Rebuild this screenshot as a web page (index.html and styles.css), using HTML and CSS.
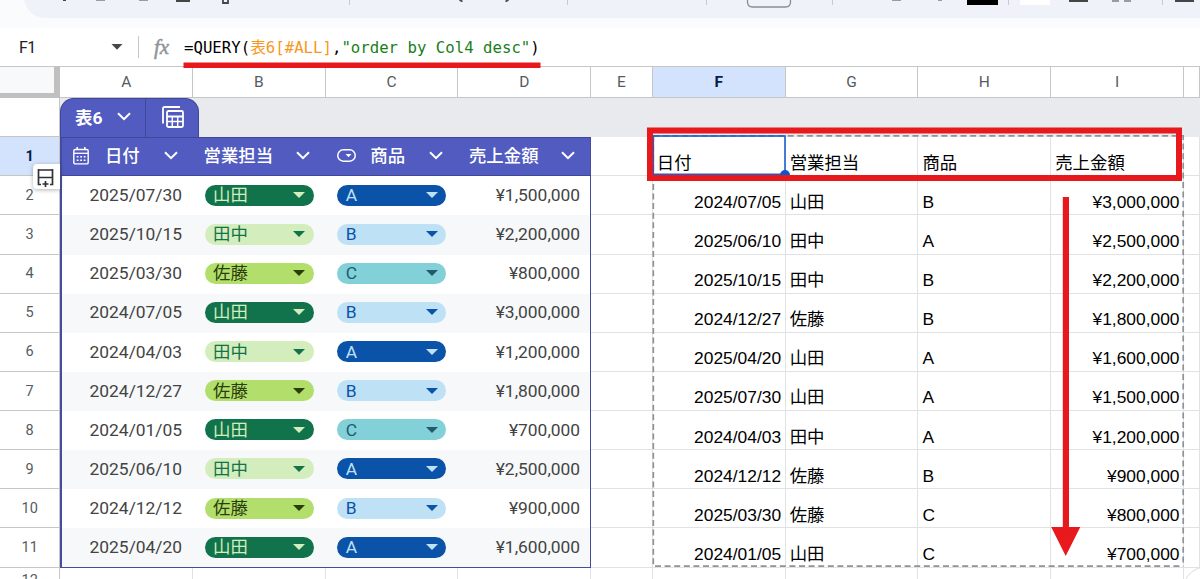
FILE: index.html
```
<!DOCTYPE html>
<html lang="ja">
<head>
    <meta charset="UTF-8">
    <meta name="viewport" content="width=device-width, initial-scale=1.0">
    <title>表6</title>
    <link rel="stylesheet" href="styles.css">
</head>
<body>
    <header class="toolbar">
        <svg width="1200" height="28" viewBox="0 0 1200 28">
            <path d="M24 0C27 11 34 18 46 18H1200V0Z" fill="#eff3f9"/>
            <g fill="#444746">
                <path d="M63 0h3v1h-3zM176 0h14v2h-14zM1069 0h19v2h-19zM1175 0h19v2h-19z"/>
            </g>
            <path d="M96 0h9v1h-9zM139 0h9v1h-9zM892 0h9v1h-9zM938 0h4v1h-4zM1112 0h7v2h-7zM1124 0h7v2h-7z" fill="#9a9da0"/>
            <path d="M223 0v3h5v-3M459.500 0l3 1.500M508.500 0l-3 1.500" fill="none" stroke="#444746" stroke-width="1.800"/>
            <path d="M349.500 0v5M567.500 0v5M706.500 0v5M832.500 0v5M1008.500 0v5M1162.500 0v5" stroke="#c7c9cc"/>
            <path d="M747.500 0v2q0 5 5 5h33q5 0 5-5V0" fill="none" stroke="#8a8d90" stroke-width="1.300"/>
            <path d="M967 0h31v5h-31z" fill="#000"/>
            <path d="M1020 0h30v5h-30z" fill="#fff"/>
        </svg>
    </header>

    <div class="formula-bar">
        <div class="name-box">
            <span>F1</span>
            <svg width="12" height="6" viewBox="0 0 12 6"><path d="M.5 0h11L6 5.800z" fill="#444746"/></svg>
        </div>
        <span class="fx">fx</span>
        <div class="formula">=QUERY(<span class="ref">表6[#ALL]</span>,<span class="str">"order by Col4 desc"</span>)</div>
    </div>

    <main class="sheet">
        <div class="row col-heads">
            <div class="corner"></div>
            <div>A</div><div>B</div><div>C</div><div>D</div><div>E</div>
            <div class="active">F</div><div>G</div><div>H</div><div>I</div><div></div>
        </div>

        <div class="tab-row">
            <div class="num"></div>
            <div class="tab">
                <div class="tab-name">表6 <svg class="chev" viewBox="0 0 14 9"><path d="M1 1.200l6 6 6-6"/></svg></div>
                <div class="tab-icon">
                    <svg width="22" height="22" viewBox="0 0 22 22" fill="none" stroke="#fff">
                        <path d="M1 17.500V2.500Q1 1 2.500 1H18" stroke-width="1.800"/>
                        <rect x="5" y="5" width="16" height="16" rx="1.500" stroke-width="1.800"/>
                        <path d="M5 10.500h16" stroke-width="2"/>
                        <path d="M5 15.500h16M10.300 10v11M15.700 10v11" stroke-width="1.500"/>
                    </svg>
                </div>
            </div>
        </div>

        <div class="row head">
            <div class="num active">1</div>
            <div class="t first">
                <svg class="cal" width="16" height="18" viewBox="0 0 16 18" fill="none" stroke="#fff">
                    <rect x=".8" y="2.500" width="14.400" height="14.400" rx="1.500" stroke-width="1.400"/>
                    <path d="M1 6.300h14" stroke-width="1.300"/><path d="M4.200 0v3M11.800 0v3" stroke-width="1.500"/>
                    <path d="M3.700 9.800h9M3.700 13.300h9" stroke-width="1.600" stroke-dasharray="1.800 1.700"/>
                </svg>
                <span>日付</span><svg class="chev" viewBox="0 0 14 9"><path d="M1 1.200l6 6 6-6"/></svg>
            </div>
            <div class="t"><span>営業担当</span><svg class="chev" viewBox="0 0 14 9"><path d="M1 1.200l6 6 6-6"/></svg></div>
            <div class="t">
                <svg class="drop" width="19" height="13" viewBox="0 0 19 13"><rect x=".8" y=".8" width="17.400" height="11.400" rx="5.500" fill="none" stroke="#fff" stroke-width="1.500"/><path d="M8.500 5h6l-3 3.200z" fill="#fff"/></svg>
                <span>商品</span><svg class="chev" viewBox="0 0 14 9"><path d="M1 1.200l6 6 6-6"/></svg>
            </div>
            <div class="t last"><span>売上金額</span><svg class="chev" viewBox="0 0 14 9"><path d="M1 1.200l6 6 6-6"/></svg></div>
            <div></div><div>日付</div><div>営業担当</div><div>商品</div><div>売上金額</div><div></div>
        </div>

        <div class="row">
            <div class="num">2</div>
            <div class="t first">2025/07/30</div><div class="t"><span class="chip yamada">山田</span></div><div class="t"><span class="chip a">A</span></div><div class="t last">¥1,500,000</div>
            <div></div><div class="right">2024/07/05</div><div>山田</div><div>B</div><div class="right">¥3,000,000</div><div></div>
        </div>
        <div class="row band">
            <div class="num">3</div>
            <div class="t first">2025/10/15</div><div class="t"><span class="chip tanaka">田中</span></div><div class="t"><span class="chip b">B</span></div><div class="t last">¥2,200,000</div>
            <div></div><div class="right">2025/06/10</div><div>田中</div><div>A</div><div class="right">¥2,500,000</div><div></div>
        </div>
        <div class="row">
            <div class="num">4</div>
            <div class="t first">2025/03/30</div><div class="t"><span class="chip sato">佐藤</span></div><div class="t"><span class="chip c">C</span></div><div class="t last">¥800,000</div>
            <div></div><div class="right">2025/10/15</div><div>田中</div><div>B</div><div class="right">¥2,200,000</div><div></div>
        </div>
        <div class="row band">
            <div class="num">5</div>
            <div class="t first">2024/07/05</div><div class="t"><span class="chip yamada">山田</span></div><div class="t"><span class="chip b">B</span></div><div class="t last">¥3,000,000</div>
            <div></div><div class="right">2024/12/27</div><div>佐藤</div><div>B</div><div class="right">¥1,800,000</div><div></div>
        </div>
        <div class="row">
            <div class="num">6</div>
            <div class="t first">2024/04/03</div><div class="t"><span class="chip tanaka">田中</span></div><div class="t"><span class="chip a">A</span></div><div class="t last">¥1,200,000</div>
            <div></div><div class="right">2025/04/20</div><div>山田</div><div>A</div><div class="right">¥1,600,000</div><div></div>
        </div>
        <div class="row band">
            <div class="num">7</div>
            <div class="t first">2024/12/27</div><div class="t"><span class="chip sato">佐藤</span></div><div class="t"><span class="chip b">B</span></div><div class="t last">¥1,800,000</div>
            <div></div><div class="right">2025/07/30</div><div>山田</div><div>A</div><div class="right">¥1,500,000</div><div></div>
        </div>
        <div class="row">
            <div class="num">8</div>
            <div class="t first">2024/01/05</div><div class="t"><span class="chip yamada">山田</span></div><div class="t"><span class="chip c">C</span></div><div class="t last">¥700,000</div>
            <div></div><div class="right">2024/04/03</div><div>田中</div><div>A</div><div class="right">¥1,200,000</div><div></div>
        </div>
        <div class="row band">
            <div class="num">9</div>
            <div class="t first">2025/06/10</div><div class="t"><span class="chip tanaka">田中</span></div><div class="t"><span class="chip a">A</span></div><div class="t last">¥2,500,000</div>
            <div></div><div class="right">2024/12/12</div><div>佐藤</div><div>B</div><div class="right">¥900,000</div><div></div>
        </div>
        <div class="row">
            <div class="num">10</div>
            <div class="t first">2024/12/12</div><div class="t"><span class="chip sato">佐藤</span></div><div class="t"><span class="chip b">B</span></div><div class="t last">¥900,000</div>
            <div></div><div class="right">2025/03/30</div><div>佐藤</div><div>C</div><div class="right">¥800,000</div><div></div>
        </div>
        <div class="row band end">
            <div class="num">11</div>
            <div class="t first">2025/04/20</div><div class="t"><span class="chip yamada">山田</span></div><div class="t"><span class="chip a">A</span></div><div class="t last">¥1,600,000</div>
            <div></div><div class="right">2024/01/05</div><div>山田</div><div>C</div><div class="right">¥700,000</div><div></div>
        </div>
        <div class="row short">
            <div class="num">12</div>
            <div></div><div></div><div></div><div></div><div></div><div></div><div></div><div></div><div></div><div></div>
        </div>
    </main>

    <div class="add-row">
        <svg width="17" height="18" viewBox="0 0 17 18" fill="none" stroke="#303134" stroke-width="1.700">
            <path d="M1.500 0v15.500H4M15.500 0v15.500H13M1.500 1h14M1.500 8.500h14M8.500 12v6M5.500 15h6"/>
        </svg>
    </div>

    <!-- selection, spill range and marks -->
    <svg class="marks" width="1200" height="579" viewBox="0 0 1200 579">
        <g fill="none" stroke="#8f9397" stroke-width="1.700" stroke-dasharray="6 3.600">
            <path d="M653.300 135.900H1183.200V566.200"/>
            <path d="M653.300 135.900V566.200H1183.200"/>
        </g>
        <rect x="653.300" y="136" width="131.700" height="38.300" fill="none" stroke="#1a5fcb" stroke-width="1.600"/>
        <circle cx="785" cy="175" r="5" fill="#0b57d0"/>
        <rect x="650" y="130.500" width="529" height="47.500" fill="none" stroke="#e8191c" stroke-width="6"/>
        <path d="M183.500 62.500h357v5.500h-357z" fill="#e8191c"/>
        <path d="M1062.800 197h6.200v330h11.300l-14.600 29-14.500-29h11.600z" fill="#e8191c"/>
        <circle cx="1206" cy="590" r="23" fill="#fff" stroke="#dadce0"/>
    </svg>
</body>
</html>
```

FILE: styles.css
```
* {
    box-sizing: border-box;
}

body {
    margin: 0;
    height: 579px;
    overflow: hidden;
    position: relative;
    background: #fff;
    font-family: Roboto, "Noto Sans CJK JP", sans-serif;
    font-size: 17.4px;
    color: #434343;
}

svg {
    display: block;
    flex: none;
}

.toolbar {
    height: 28px;
    background: #f9fbfd;
}

/* formula bar */
.formula-bar {
    display: flex;
    align-items: center;
    height: 38px;
}

.name-box {
    display: flex;
    align-items: center;
    justify-content: space-between;
    width: 139px;
    height: 22px;
    padding: 0 15px 0 19px;
    border-right: 1px solid #c7c7c7;
    font-size: 16px;
    letter-spacing: -0.5px;
    color: #202124;
}

.fx {
    width: 45px;
    padding-left: 15px;
    font: italic 21px "Liberation Serif", serif;
    color: #909498;
    -webkit-text-stroke: 0.5px #909498;
}

.formula {
    padding-top: 1px;
    font-family: "DejaVu Sans Mono", "Noto Sans CJK JP", monospace;
    font-size: 15.7px;
    line-height: 24px;
    white-space: pre;
    color: #000;
}

.ref {
    color: #f7981d;
}

.str {
    color: #188018;
}

/* grid */
.row {
    display: grid;
    grid-template-columns: 60.4px repeat(4, 132.7px) 61.700px repeat(4, 132.8px) 1fr;
    height: 39.14px;
}

.row > div {
    display: flex;
    align-items: flex-end;
    padding: 0 4px 0.700px 4px;
    border-right: 1px solid #e1e2e3;
    border-bottom: 1px solid #e1e2e3;
    font-family: "Liberation Sans", "Noto Sans CJK JP", sans-serif;
    line-height: 24px;
    color: #000;
    white-space: nowrap;
}

.row > .right {
    justify-content: flex-end;
    padding-right: 3.500px;
}

.col-heads {
    height: 32px;
}

.col-heads > div {
    align-items: center;
    justify-content: center;
    padding: 0;
    border-top: 1px solid #c4c7c5;
    border-color: #c4c7c5;
    font-family: Roboto, sans-serif;
    font-size: 15.5px;
    color: #575b5f;
}

.col-heads > .corner {
    border-right: 6px solid #c0c0c0;
    border-bottom: 5px solid #c0c0c0;
    background: #f8f9fa;
}

.row > .active {
    background: #d3e3fd;
    color: #041e49;
    font-weight: 700;
}

.row > .num,
.tab-row > .num {
    align-items: center;
    justify-content: center;
    padding: 1px 0 0;
    border-right: 1px solid #c4c7c5;
    border-bottom: 1px solid #c4c7c5;
    font-family: Roboto, sans-serif;
    font-size: 14.500px;
    color: #575b5f;
}

.row > .num.active {
    color: #041e49;
}

.row.short {
    height: 26px;
}

/* table tab */
.tab-row {
    display: flex;
    height: 39.200px;
    background: #e8eaed;
}

.tab-row > .num {
    width: 60px;
    background: #fff;
}

.tab {
    display: flex;
    width: 139px;
    border: 1px solid #3f4798;
    border-bottom: 0;
    border-radius: 14px 14px 0 0;
    background: #525bbf;
    color: #fff;
}

.tab-name {
    display: flex;
    align-items: center;
    justify-content: space-between;
    width: 85px;
    padding: 0 14px 4px 14px;
    border-right: 1px solid #3f4798;
    font-weight: 700;
}

.tab-icon {
    flex: 1;
    padding: 7px 0 0 16px;
}

.chev {
    width: 14px;
    height: 9px;
    fill: none;
    stroke: #fff;
    stroke-width: 2;
}

/* table body */
.row > .t {
    align-items: center;
    padding: 0 0 1.600px 11.500px;
    border: 0;
    font-family: Roboto, "Noto Sans CJK JP", sans-serif;
    color: #434343;
}

.row > .first {
    justify-content: flex-end;
    padding-right: 11px;
    border-left: 2px solid #444c9e;
}

.row > .last {
    justify-content: flex-end;
    padding-right: 10px;
    border-right: 1px solid #444c9e;
}

.band > .t {
    background: #f6f8f9;
}

.end > .t {
    padding-bottom: 0.600px;
    border-bottom: 1px solid #444c9e;
}

.head > .t {
    justify-content: space-between;
    padding: 0 15.500px 1.600px 10.500px;
    border-top: 1px solid #3f4798;
    border-bottom: 1px solid #3f4798;
    background: #525bbf;
    color: #fff;
    font-weight: 500;
}

.head > .t span {
    flex: 1;
}

.head .cal {
    margin-right: 16px;
}

.head .drop {
    margin: 0 14px 0 1px;
}

.chip {
    display: flex;
    align-items: center;
    justify-content: space-between;
    width: 109px;
    height: 21px;
    padding: 0 8.500px;
    border-radius: 11px;
}

.chip::after {
    content: "";
    border: 6px solid transparent;
    border-top-color: currentColor;
    border-bottom: 0;
}

.yamada {
    background: #11734b;
    color: #d4edbc;
}

.tanaka {
    background: #d4edbc;
    color: #11734b;
}

.sato {
    background: #b2df6c;
    color: #2b3d0b;
}

.a {
    background: #0a53a8;
    color: #bfe1f6;
}

.b {
    background: #bfe1f6;
    color: #0a53a8;
}

.c {
    background: #83d1d8;
    color: #215a6c;
}

/* overlays */
.add-row {
    position: absolute;
    left: 33px;
    top: 164px;
    width: 27px;
    height: 25px;
    padding: 5px 0 0 4px;
    border-radius: 4px 0 0 4px;
    background: #fff;
    box-shadow: 0 1px 4px rgba(60, 64, 67, 0.4);
}

.marks {
    position: absolute;
    left: 0;
    top: 0;
    pointer-events: none;
}
```
